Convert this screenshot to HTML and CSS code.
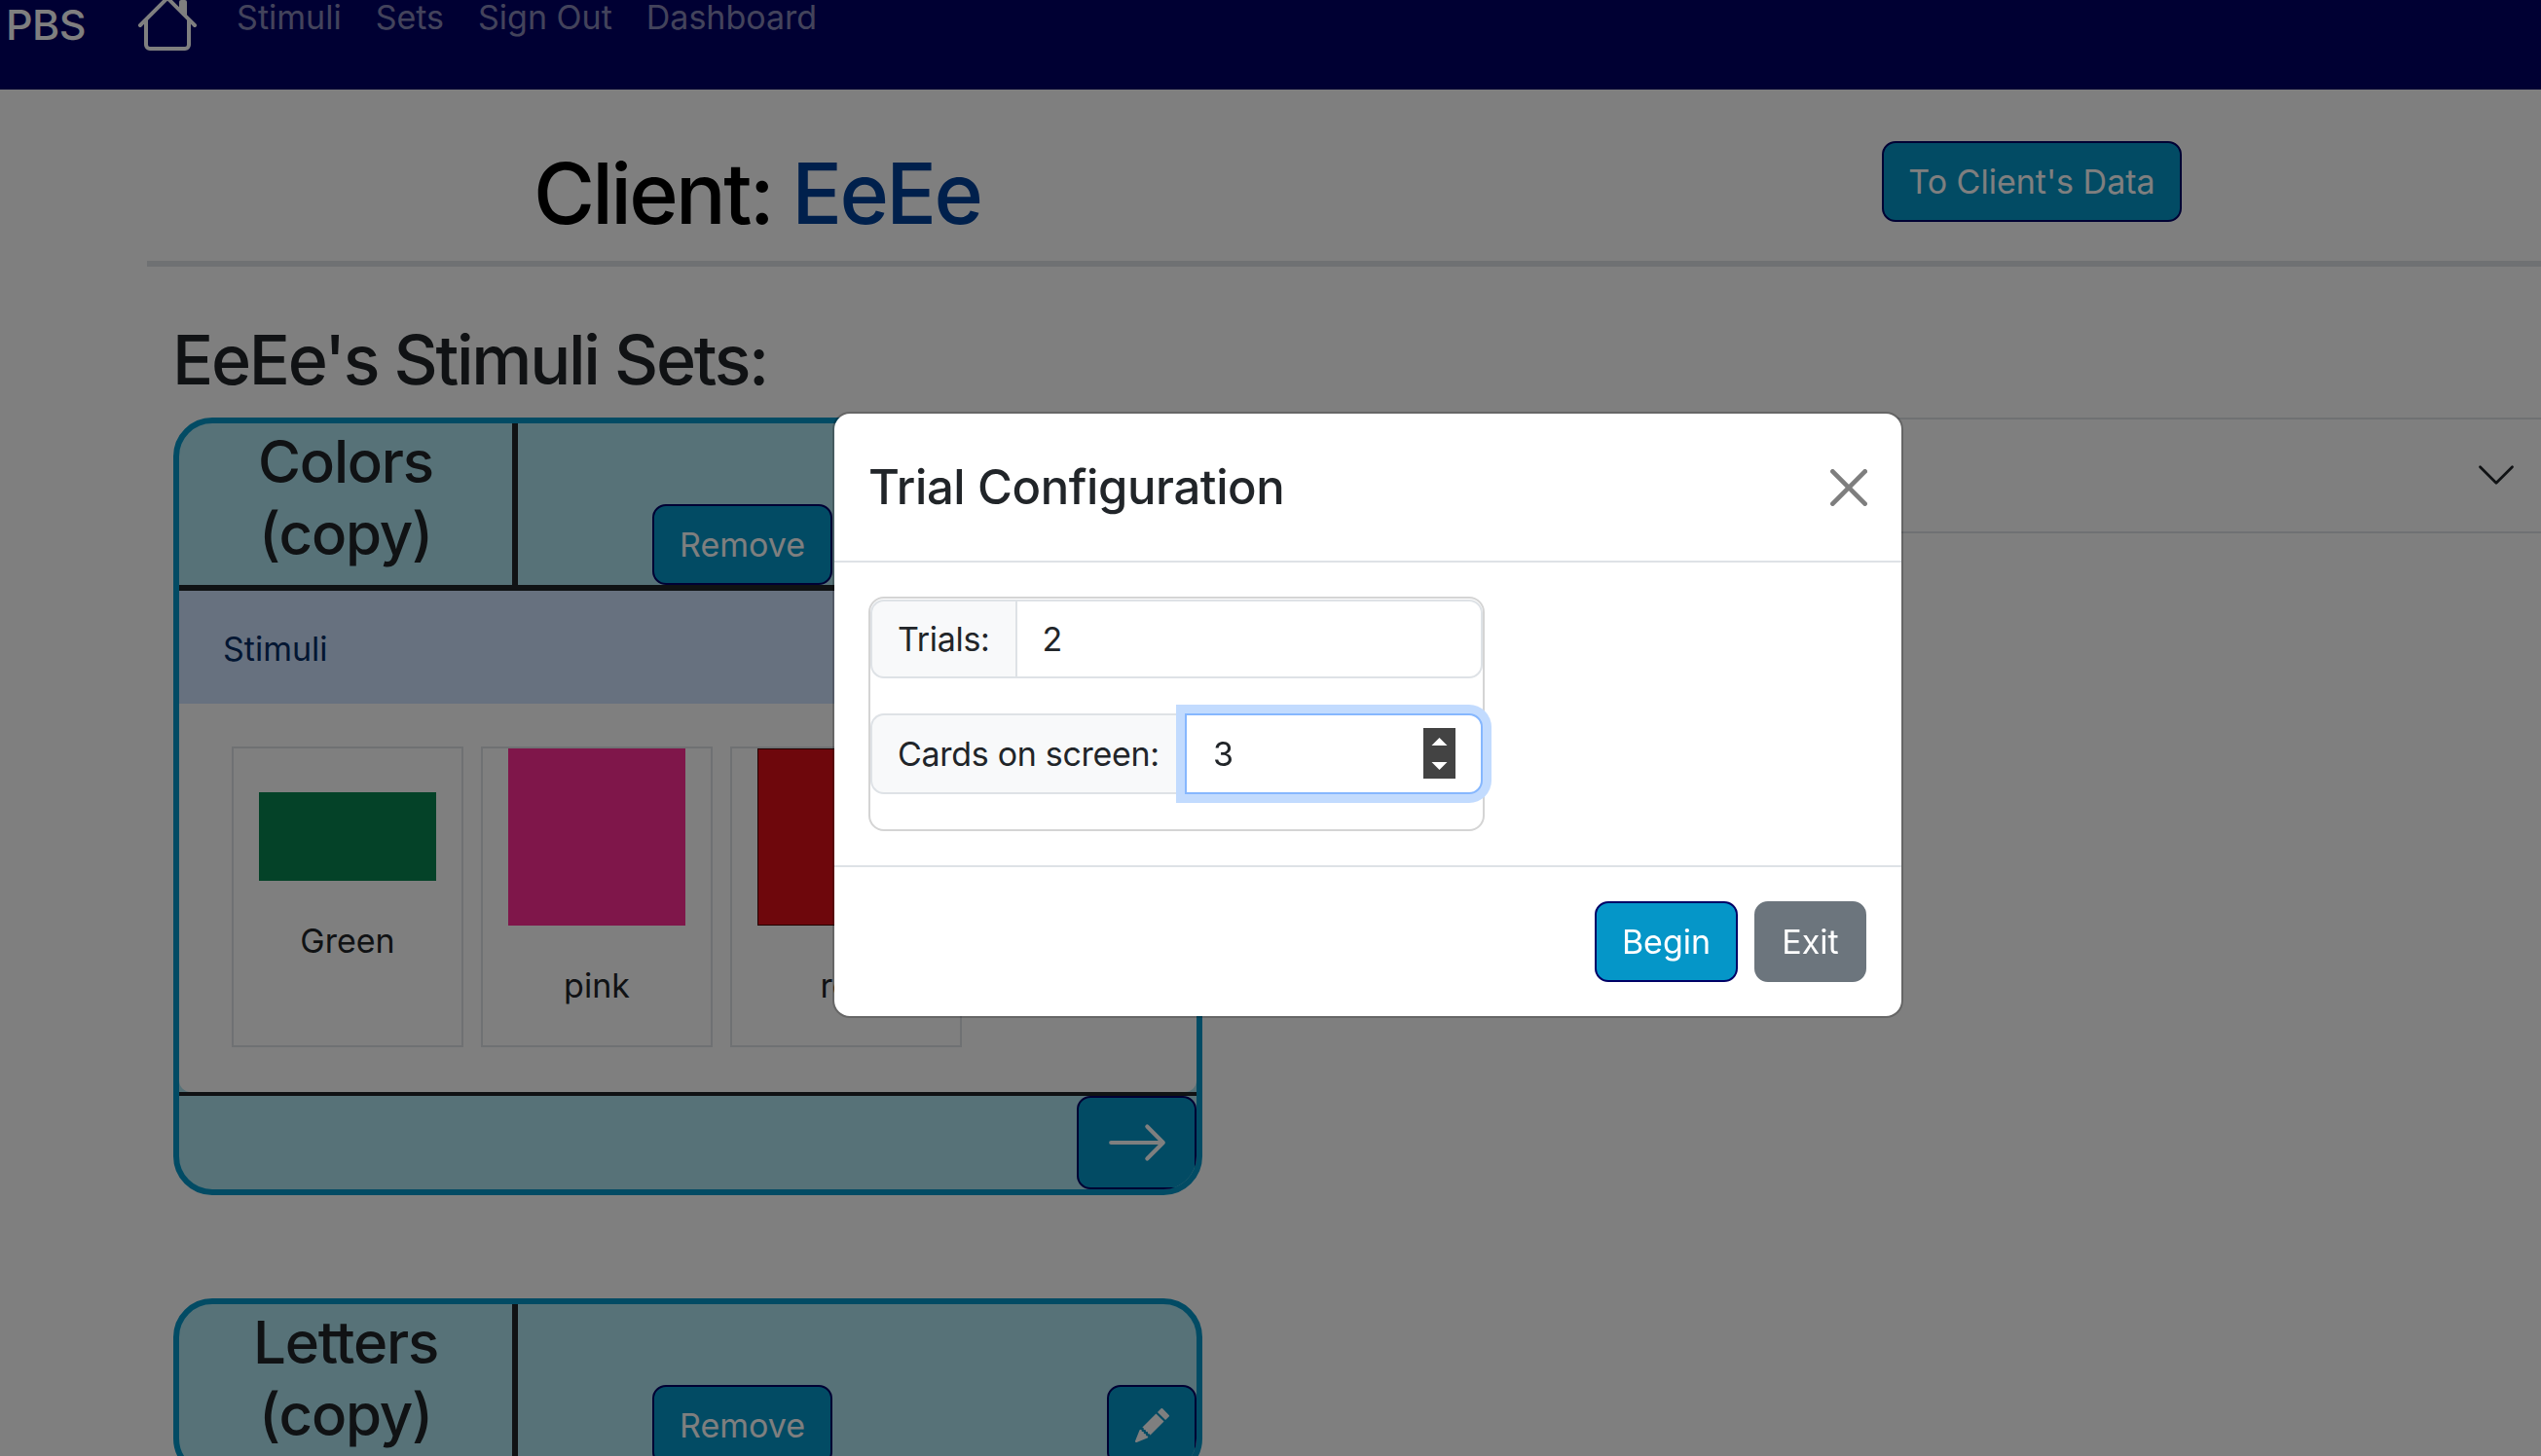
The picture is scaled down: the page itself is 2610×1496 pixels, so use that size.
FILE: index.html
```html
<!DOCTYPE html>
<html lang="en">
<head>
  <meta charset="UTF-8" />
  <title>PBS - Client</title>
  <link rel="stylesheet" href="styles.css">
</head>
<body>
  <nav class="navbar">
    <span class="brand">PBS</span>
    <svg class="home-icon" viewBox="0 0 16 16" fill="currentColor"><path d="M8.707 1.5a1 1 0 0 0-1.414 0L.646 8.146a.5.5 0 0 0 .708.708L2 8.207V13.5A1.5 1.5 0 0 0 3.5 15h9a1.5 1.5 0 0 0 1.5-1.5V8.207l.646.647a.5.5 0 0 0 .708-.708L13 5.793V2.5a.5.5 0 0 0-.5-.5h-1a.5.5 0 0 0-.5.5v1.293L8.707 1.5ZM13 7.207V13.5a.5.5 0 0 1-.5.5h-9a.5.5 0 0 1-.5-.5V7.207l5-5 5 5Z"/></svg>
    <a class="nav-link">Stimuli</a>
    <a class="nav-link">Sets</a>
    <a class="nav-link">Sign Out</a>
    <a class="nav-link">Dashboard</a>
  </nav>

  <header class="client-row">
    <h1 class="client-title">Client: <span class="client-name">EeEe</span></h1>
    <button class="btn btn-teal data-btn">To Client's Data</button>
  </header>

  <h2 class="sets-title">EeEe's Stimuli Sets:</h2>

  <div class="columns">
    <div class="set-list">
      <section class="set-card">
        <div class="set-head">
          <div class="set-name">Colors<br>(copy)</div>
          <div class="set-actions">
            <button class="btn btn-teal remove-btn">Remove</button>
            <button class="btn btn-teal edit-btn">
              <svg class="edit-icon" viewBox="0 0 16 16" fill="currentColor"><path d="M12.854.146a.5.5 0 0 0-.707 0L10.5 1.793 14.207 5.5l1.647-1.646a.5.5 0 0 0 0-.708l-3-3zm.646 6.061L9.793 2.5 3.293 9H3.5a.5.5 0 0 1 .5.5v.5h.5a.5.5 0 0 1 .5.5v.5h.5a.5.5 0 0 1 .5.5v.5h.5a.5.5 0 0 1 .5.5v.207l6.5-6.5zm-7.468 7.468A.5.5 0 0 1 6 13.5V13h-.5a.5.5 0 0 1-.5-.5V12h-.5a.5.5 0 0 1-.5-.5V11h-.5a.5.5 0 0 1-.5-.5V10h-.5a.499.499 0 0 1-.175-.032l-.179.178a.5.5 0 0 0-.11.168l-2 5a.5.5 0 0 0 .65.65l5-2a.5.5 0 0 0 .168-.11l.178-.178z"/></svg>
            </button>
          </div>
        </div>
        <div class="stimuli-head">Stimuli</div>
        <div class="stimuli-body">
          <div class="stim-card">
            <div class="swatch swatch-green"></div>
            <div class="stim-label">Green</div>
          </div>
          <div class="stim-card stim-card-tall">
            <div class="swatch swatch-pink"></div>
            <div class="stim-label">pink</div>
          </div>
          <div class="stim-card stim-card-tall">
            <div class="swatch swatch-red"></div>
            <div class="stim-label">red</div>
          </div>
        </div>
        <div class="set-foot">
          <button class="btn btn-teal next-btn">
            <svg class="next-icon" viewBox="0 0 16 16" fill="currentColor"><path d="M1 8a.5.5 0 0 1 .5-.5h11.793l-3.147-3.146a.5.5 0 0 1 .708-.708l4 4a.5.5 0 0 1 0 .708l-4 4a.5.5 0 0 1-.708-.708L13.293 8.5H1.5A.5.5 0 0 1 1 8z"/></svg>
          </button>
        </div>
      </section>

      <section class="set-card">
        <div class="set-head">
          <div class="set-name">Letters<br>(copy)</div>
          <div class="set-actions">
            <button class="btn btn-teal remove-btn">Remove</button>
            <button class="btn btn-teal edit-btn">
              <svg class="edit-icon" viewBox="0 0 16 16" fill="currentColor"><path d="M12.854.146a.5.5 0 0 0-.707 0L10.5 1.793 14.207 5.5l1.647-1.646a.5.5 0 0 0 0-.708l-3-3zm.646 6.061L9.793 2.5 3.293 9H3.5a.5.5 0 0 1 .5.5v.5h.5a.5.5 0 0 1 .5.5v.5h.5a.5.5 0 0 1 .5.5v.5h.5a.5.5 0 0 1 .5.5v.207l6.5-6.5zm-7.468 7.468A.5.5 0 0 1 6 13.5V13h-.5a.5.5 0 0 1-.5-.5V12h-.5a.5.5 0 0 1-.5-.5V11h-.5a.5.5 0 0 1-.5-.5V10h-.5a.499.499 0 0 1-.175-.032l-.179.178a.5.5 0 0 0-.11.168l-2 5a.5.5 0 0 0 .65.65l5-2a.5.5 0 0 0 .168-.11l.178-.178z"/></svg>
            </button>
          </div>
        </div>
      </section>
    </div>

    <div class="side-accordion">
      <svg class="chevron" viewBox="0 0 16 16" fill="currentColor"><path d="M1.646 4.646a.5.5 0 0 1 .708 0L8 10.293l5.646-5.647a.5.5 0 0 1 .708.708l-6 6a.5.5 0 0 1-.708 0l-6-6a.5.5 0 0 1 0-.708z"/></svg>
    </div>
  </div>

  <div class="backdrop"></div>

  <div class="modal">
    <div class="modal-header">
      <h5 class="modal-title">Trial Configuration</h5>
      <svg class="close-icon" viewBox="0 0 16 16" fill="currentColor"><path d="M.293.293a1 1 0 011.414 0L8 6.586 14.293.293a1 1 0 111.414 1.414L9.414 8l6.293 6.293a1 1 0 01-1.414 1.414L8 9.414l-6.293 6.293a1 1 0 01-1.414-1.414L6.586 8 .293 1.707a1 1 0 010-1.414z"/></svg>
    </div>
    <div class="modal-body">
      <div class="config-box">
        <div class="input-group">
          <span class="addon">Trials:</span>
          <input class="field" type="text" value="2" />
        </div>
        <div class="input-group input-group-focus">
          <span class="addon">Cards on screen:</span>
          <input class="field field-focus" type="text" value="3" />
          <svg class="spinner" viewBox="0 0 33 52"><rect width="33" height="52" fill="#434343"/><polygon points="16.5,10 24.5,18 8.5,18" fill="#fff"/><polygon points="8.5,35 24.5,35 16.5,43" fill="#fff"/></svg>
        </div>
      </div>
    </div>
    <div class="modal-footer">
      <button class="btn btn-teal begin-btn">Begin</button>
      <button class="btn exit-btn">Exit</button>
    </div>
  </div>
</body>
</html>
```

FILE: styles.css
```css
* {
  box-sizing: border-box;
}

html, body {
  height: 100%;
}

body {
  margin: 0;
  overflow: hidden;
  font-family: Inter, "Liberation Sans", sans-serif;
  color: #212529;
  background: #fff;
}

.navbar {
  display: flex;
  align-items: flex-start;
  height: 92px;
  padding-left: 6px;
  background: #000066;
  overflow: hidden;
}

.brand {
  margin-right: 52px;
  color: #fff;
  font-size: 43px;
  font-weight: 500;
  letter-spacing: -0.5px;
  line-height: 50px;
}

.home-icon {
  flex: none;
  width: 64px;
  height: 64px;
  margin-top: -8px;
  margin-right: 39px;
  color: #fff;
}

.nav-link {
  margin-right: 35px;
  color: rgba(255, 255, 255, 0.55);
  font-size: 34px;
  line-height: 36px;
}

.btn {
  border: 2px solid #000066;
  border-radius: 14px;
  font-family: inherit;
  font-size: 34px;
  color: #fff;
  height: 83px;
  padding: 0;
}

.btn-teal {
  background: #0596c8;
}

.client-row {
  display: flex;
  align-items: flex-start;
  height: 182px;
  margin-left: 151px;
  padding-left: 397px;
  border-bottom: 6px solid #dee2e6;
}

.client-title {
  width: 1385px;
  margin: 0;
  margin-top: 56px;
  font-size: 86px;
  font-weight: 500;
  letter-spacing: -2.7px;
  line-height: 102px;
  color: #000;
}

.client-name {
  color: #004099;
}

.data-btn {
  width: 308px;
  margin-top: 53px;
}

.sets-title {
  margin: 54px 0 0 177px;
  font-size: 70px;
  font-weight: 500;
  letter-spacing: -2.3px;
  line-height: 84px;
}

.columns {
  display: flex;
  margin-top: 17px;
}

.set-list {
  flex: none;
  display: flex;
  flex-direction: column;
  gap: 106px;
  width: 1057px;
  margin-left: 178px;
}

.set-card {
  border: 6px solid #0596c8;
  border-radius: 40px;
  background: #aee4f0;
  overflow: hidden;
}

.set-head {
  display: flex;
  height: 172px;
  border-bottom: 6px solid #212529;
}

.set-name {
  width: 348px;
  border-right: 6px solid #212529;
  font-size: 60px;
  font-weight: 500;
  letter-spacing: -1.2px;
  line-height: 74px;
  text-align: center;
  padding-top: 2px;
}

.set-actions {
  flex: 1;
  display: flex;
  justify-content: space-between;
  align-items: flex-end;
  padding: 0 0 0 138px;
}

.remove-btn {
  width: 185px;
}

.edit-btn {
  width: 92px;
}

.edit-icon {
  display: block;
  width: 35px;
  height: 35px;
  margin: 0 auto;
}

.stimuli-head {
  display: flex;
  align-items: center;
  height: 116px;
  padding: 2px 0 0 45px;
  background: #cfe2ff;
  color: #052c65;
  font-size: 34px;
}

.stimuli-body {
  display: flex;
  align-items: flex-start;
  gap: 18px;
  height: 399px;
  padding: 44px 0 0 54px;
  background: #fff;
  border-radius: 0 0 12px 12px;
}

.stim-card {
  width: 238px;
  height: 309px;
  padding: 45px 26px 0;
  border: 2px solid #dee2e6;
  text-align: center;
  font-size: 34px;
}

.stim-card-tall {
  padding-top: 0;
}

.swatch {
  width: 182px;
}

.swatch-green {
  height: 91px;
  background: #088450;
}

.swatch-pink {
  height: 182px;
  background: #ff2c94;
}

.swatch-red {
  height: 182px;
  background: #dc0e18;
  border: 1px solid #400;
}

.stim-label {
  margin-top: 41px;
  line-height: 42px;
}

.set-foot {
  display: flex;
  justify-content: flex-end;
  height: 100px;
  border-top: 4px solid #212529;
}

.next-btn {
  width: 123px;
  height: 96px;
}

.next-icon {
  display: block;
  width: 66px;
  height: 66px;
  margin: 0 auto;
}

.side-accordion {
  flex: 1;
  display: flex;
  justify-content: flex-end;
  align-items: center;
  height: 119px;
  margin-left: 25px;
  padding-right: 24px;
  border-top: 2px solid #dee2e6;
  border-bottom: 2px solid #dee2e6;
}

.chevron {
  width: 44px;
  height: 44px;
  margin-bottom: 2px;
}

.backdrop {
  position: fixed;
  inset: 0;
  background: rgba(0, 0, 0, 0.5);
}

.modal {
  position: fixed;
  left: 855px;
  top: 423px;
  width: 1100px;
  height: 623px;
  border: 2px solid rgba(0, 0, 0, 0.2);
  border-radius: 18px;
  background: #fff;
  background-clip: padding-box;
}

.modal-header {
  display: flex;
  justify-content: space-between;
  align-items: center;
  height: 153px;
  padding: 0 35px;
  border-bottom: 2px solid #dee2e6;
}

.modal-title {
  margin: 0;
  font-size: 49px;
  font-weight: 500;
  letter-spacing: -0.4px;
}

.close-icon {
  width: 38px;
  height: 38px;
  opacity: 0.5;
  color: #000;
}

.modal-body {
  padding: 35px 34px 35px 35px;
}

.config-box {
  width: 633px;
  padding: 1px 0 36px;
  border: 2px solid #d4d4d4;
  border-radius: 16px;
}

.input-group {
  position: relative;
  display: flex;
  height: 81px;
  margin-bottom: 36px;
}

.input-group-focus {
  height: 83px;
  margin-bottom: 0;
}

.addon {
  display: flex;
  align-items: center;
  padding: 0 26px;
  border: 2px solid #dee2e6;
  border-right: 0;
  border-radius: 14px 0 0 14px;
  background: #f8f9fa;
  font-size: 34px;
  letter-spacing: -0.3px;
}

.field {
  flex: 1;
  min-width: 0;
  padding: 0 26px;
  border: 2px solid #dee2e6;
  border-radius: 0 14px 14px 0;
  font-family: inherit;
  font-size: 34px;
  color: #212529;
  outline: none;
}

.field-focus {
  z-index: 1;
  padding-left: 27px;
  border-color: #86b7fe;
  box-shadow: 0 0 0 9px #c2dbfe;
}

.spinner {
  position: absolute;
  z-index: 2;
  right: 28px;
  top: 15px;
  width: 33px;
  height: 52px;
}

.modal-footer {
  display: flex;
  justify-content: flex-end;
  gap: 17px;
  padding: 35px 36px;
  border-top: 2px solid #dee2e6;
}

.begin-btn {
  width: 147px;
}

.exit-btn {
  width: 115px;
  background: #6c757d;
  border-color: #6c757d;
}
```
